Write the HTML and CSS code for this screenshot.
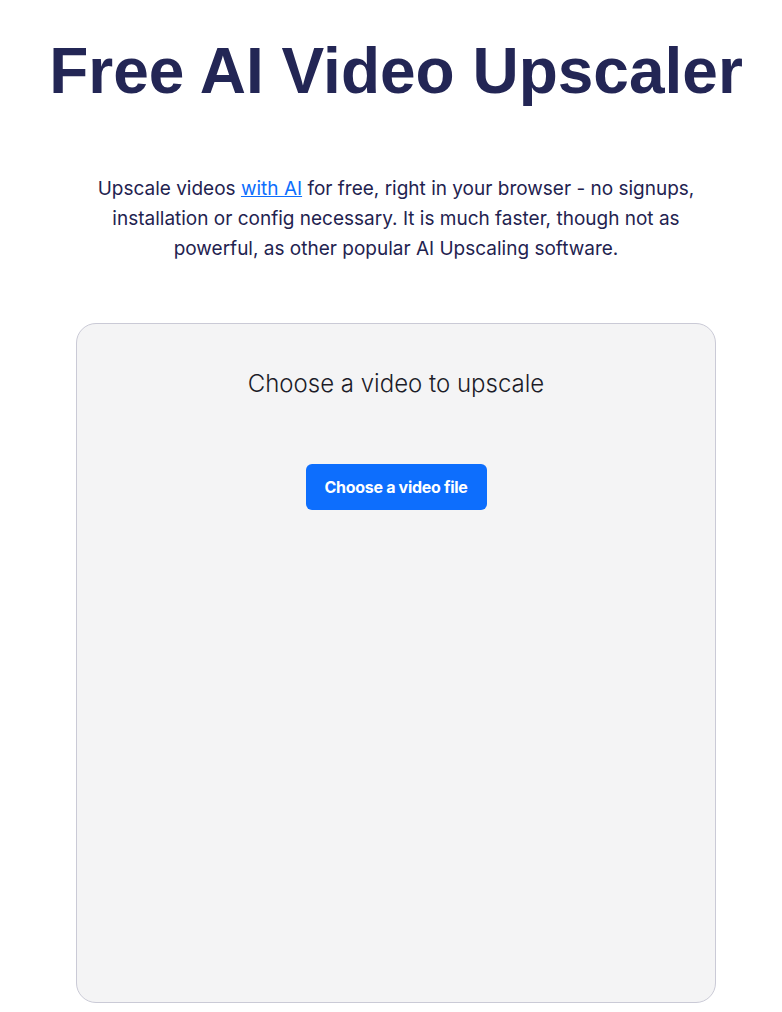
FILE: index.html
```html
<!DOCTYPE html>
<html lang="en">
<head>
    <meta charset="UTF-8">
    <meta name="viewport" content="width=device-width, initial-scale=1.0">
    <title>Free AI Video Upscaler</title>
    <link rel="stylesheet" href="styles.css">
</head>
<body>
    <div class="page">
        <h1 class="title">Free AI Video Upscaler</h1>
        <p class="intro">
            Upscale videos <a href="#">with AI</a> for free, right in your browser - no signups,
            installation or config necessary. It is much faster, though not as
            powerful, as other popular AI Upscaling software.
        </p>
        <div class="card">
            <h2 class="card-title">Choose a video to upscale</h2>
            <button class="upload-btn" type="button">Choose a video file</button>
        </div>
    </div>
</body>
</html>
```

FILE: styles.css
```css
body {
    margin: 0;
    font-family: Inter, "Noto Sans", sans-serif;
    background-color: #ffffff;
    color: #1f2350;
}
.page {
    display: flex;
    flex-direction: column;
    align-items: center;
    padding-left: 10px;
}
.title {
    margin: 26px 0 0;
    font-family: "Liberation Sans", Arial, sans-serif;
    font-weight: 700;
    font-size: 64px;
    line-height: 90px;
    color: #232655;
}
.intro {
    margin: 58px 0 0;
    max-width: 620px;
    text-align: center;
    font-size: 19px;
    line-height: 30px;
    font-weight: 400;
    color: #1f2350;
}
.intro a {
    color: #0d6efd;
}
.card {
    box-sizing: border-box;
    width: 640px;
    height: 680px;
    margin-top: 59px;
    display: flex;
    flex-direction: column;
    align-items: center;
    background-color: #f4f4f5;
    border: 1px solid #cacad6;
    border-radius: 20px;
}
.card-title {
    margin: 44px 0 0;
    font-size: 24px;
    line-height: 32px;
    font-weight: 300;
    color: #1c1c28;
}
.upload-btn {
    margin-top: 64px;
    width: 181px;
    height: 46px;
    border: none;
    border-radius: 6px;
    background-color: #0d6efd;
    color: #ffffff;
    font-family: Inter, "Noto Sans", sans-serif;
    font-size: 16px;
    font-weight: 700;
    letter-spacing: -0.3px;
}
```
